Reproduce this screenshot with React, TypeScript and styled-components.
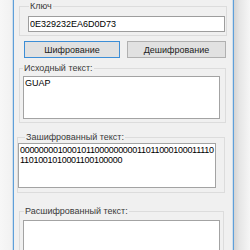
import React from "react";
import styled, { createGlobalStyle } from "styled-components";

const GlobalStyle = createGlobalStyle`
  html, body {
    margin: 0;
    padding: 0;
    background: #f4f4f4;
    overflow: hidden;
  }
  * {
    box-sizing: border-box;
  }
`;

const Screen = styled.div`
  display: flex;
  align-items: flex-start;
  width: 250px;
  height: 250px;
  overflow: hidden;
  font-family: "Liberation Sans", Arial, sans-serif;
  font-size: 9px;
`;

const Backdrop = styled.div`
  align-self: stretch;
  width: 13px;
  background: linear-gradient(90deg, #f7f7f7, #f1f1f1);
`;

const Frame = styled.div`
  align-self: stretch;
  width: 1px;
  background: #5e9fd9;
  box-shadow: 0 0 0 0.5px rgba(110, 170, 225, 0.5);
`;

const Shadow = styled.div`
  align-self: stretch;
  flex: 1;
  background: linear-gradient(90deg, #d4d4d4 0%, #e6e6e6 35%, #f6f6f6 100%);
`;

const Window = styled.div`
  width: 219px;
  height: 300px;
  background: #f0f0f0;
`;

const Group = styled.fieldset<{ $left: number; $width: number; $top: number; $pad: string }>`
  margin: ${(p) => p.$top}px 0 0 ${(p) => p.$left}px;
  width: ${(p) => p.$width}px;
  padding: ${(p) => p.$pad};
  border: 1px solid #dcdcdc;
  min-width: 0;
`;

const Caption = styled.legend<{ $indent: number }>`
  margin-left: ${(p) => p.$indent}px;
  padding: 0 1px;
  line-height: 10px;
  color: #3a3a3a;
`;

const KeyBox = styled.input`
  display: block;
  margin-left: 8px;
  width: 197px;
  height: 16px;
  padding: 0 1px;
  border: 1px solid #9d9d9d;
  background: #fff;
  font: inherit;
  color: #000;
  outline: none;
`;

const ButtonRow = styled.div`
  display: flex;
  gap: 7px;
  padding: 5px 0 0 10px;
`;

const Button = styled.button<{ $width: number; $focused?: boolean }>`
  width: ${(p) => p.$width}px;
  height: 17px;
  padding: 0;
  border: 1px solid ${(p) => (p.$focused ? "#3d8ed6" : "#b0b0b0")};
  background: #e1e1e1;
  font: inherit;
  color: #222;
`;

const TextArea = styled.textarea<{ $width: number; $height: number; $left: number }>`
  display: block;
  margin-left: ${(p) => p.$left}px;
  width: ${(p) => p.$width}px;
  height: ${(p) => p.$height}px;
  padding: 2px 1px;
  border: 1px solid #a3a3a3;
  background: #fff;
  font: inherit;
  line-height: 9.5px;
  color: #000;
  resize: none;
  outline: none;
  overflow: hidden;
  word-break: break-all;
`;

const BinaryArea = styled(TextArea)`
  letter-spacing: -0.3px;
`;

export default function App() {
  return (
    <>
      <GlobalStyle />
      <Screen>
        <Backdrop />
        <Frame />
        <Window>
          <Group $left={5} $width={208} $top={1} $pad="5px 0 3px 0">
            <Caption $indent={9}>Ключ</Caption>
            <KeyBox readOnly value="0E329232EA6D0D73" />
          </Group>
          <ButtonRow>
            <Button $width={96} $focused>
              Шифрование
            </Button>
            <Button $width={99}>Дешифрование</Button>
          </ButtonRow>
          <Group $left={5} $width={207} $top={5} $pad="3px 0 3px 0">
            <Caption $indent={3}>Исходный текст:</Caption>
            <TextArea readOnly $left={3} $width={197} $height={43} value="GUAP" />
          </Group>
          <Group $left={3} $width={208} $top={9} $pad="1px 0 4px 0">
            <Caption $indent={7}>Зашифрованный текст:</Caption>
            <BinaryArea
              readOnly
              $left={0}
              $width={198}
              $height={45}
              value="0000000010001011000000000110110001000111101101001010001100100000"
            />
          </Group>
          <Group $left={5} $width={205} $top={13} $pad="4px 0 3px 0">
            <Caption $indent={4}>Расшифрованный текст:</Caption>
            <TextArea readOnly $left={3} $width={197} $height={70} value="" />
          </Group>
        </Window>
        <Frame />
        <Shadow />
      </Screen>
    </>
  );
}
